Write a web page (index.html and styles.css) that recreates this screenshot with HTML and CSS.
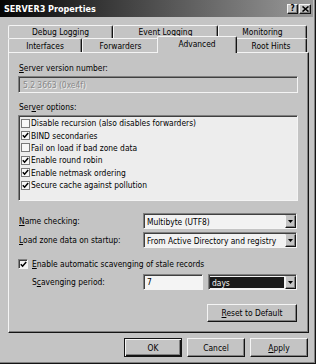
FILE: index.html
```html
<!DOCTYPE html>
<html lang="en">

<head>
    <meta charset="UTF-8">
    <meta name="viewport" content="width=device-width, initial-scale=1.0">
    <title>SERVER3 Properties</title>
    <link rel="stylesheet" href="styles.css">
</head>

<body>
    <div class="window">
        <div class="frame">
            <div class="titlebar">
                <span class="title">SERVER3 Properties</span>
                <div class="title-buttons">
                    <div class="tbtn help">?</div>
                    <div class="tbtn close">
                        <svg width="7" height="6" viewBox="0 0 7 6">
                            <path d="M0.5 0.5 L6.5 5.5 M6.5 0.5 L0.5 5.5" stroke="#000" stroke-width="1.6" fill="none" />
                        </svg>
                    </div>
                </div>
            </div>

            <div class="tabs">
                <div class="tab-row back">
                    <div class="tab w-debug">Debug Logging</div>
                    <div class="tab w-event">Event Logging</div>
                    <div class="tab w-monitor">Monitoring</div>
                </div>
                <div class="tab-row front">
                    <div class="tab w-iface">Interfaces</div>
                    <div class="tab w-fwd">Forwarders</div>
                    <div class="tab w-adv active">Advanced</div>
                    <div class="tab w-root">Root Hints</div>
                </div>
            </div>

            <div class="panel">
                <div class="label"><u>S</u>erver version number:</div>
                <div class="textbox disabled">5.2 3663 (0xe4f)</div>

                <div class="label gap">Ser<u>v</u>er options:</div>
                <div class="list">
                    <div class="item"><span class="lcheck"></span>Disable recursion (also disables forwarders)</div>
                    <div class="item"><span class="lcheck on"><svg width="7" height="7" viewBox="0 0 7 7"><path d="M0.8 3.2 L2.6 5.2 L6.2 1" stroke="#000" stroke-width="1.5" fill="none" /></svg></span>BIND secondaries</div>
                    <div class="item"><span class="lcheck"></span>Fail on load if bad zone data</div>
                    <div class="item"><span class="lcheck on"><svg width="7" height="7" viewBox="0 0 7 7"><path d="M0.8 3.2 L2.6 5.2 L6.2 1" stroke="#000" stroke-width="1.5" fill="none" /></svg></span>Enable round robin</div>
                    <div class="item"><span class="lcheck on"><svg width="7" height="7" viewBox="0 0 7 7"><path d="M0.8 3.2 L2.6 5.2 L6.2 1" stroke="#000" stroke-width="1.5" fill="none" /></svg></span>Enable netmask ordering</div>
                    <div class="item"><span class="lcheck on"><svg width="7" height="7" viewBox="0 0 7 7"><path d="M0.8 3.2 L2.6 5.2 L6.2 1" stroke="#000" stroke-width="1.5" fill="none" /></svg></span>Secure cache against pollution</div>
                </div>

                <div class="field-row first">
                    <div class="field-label"><u>N</u>ame checking:</div>
                    <div class="select">
                        <div class="value">Multibyte (UTF8)</div>
                        <div class="arrow"><svg width="5" height="3" viewBox="0 0 5 3"><path d="M0 0 H5 L2.5 3 Z" fill="#000" /></svg></div>
                    </div>
                </div>
                <div class="field-row second">
                    <div class="field-label"><u>L</u>oad zone data on startup:</div>
                    <div class="select">
                        <div class="value">From Active Directory and registry</div>
                        <div class="arrow"><svg width="5" height="3" viewBox="0 0 5 3"><path d="M0 0 H5 L2.5 3 Z" fill="#000" /></svg></div>
                    </div>
                </div>

                <div class="check-row">
                    <span class="check"><svg width="7" height="7" viewBox="0 0 7 7"><path d="M0.8 3.2 L2.6 5.2 L6.2 1" stroke="#000" stroke-width="1.5" fill="none" /></svg></span>
                    <span><u>E</u>nable automatic scavenging of stale records</span>
                </div>

                <div class="field-row scav">
                    <div class="field-label">S<u>c</u>avenging period:</div>
                    <div class="textbox small">7</div>
                    <div class="select days focus">
                        <div class="value">days</div>
                        <div class="arrow"><svg width="5" height="3" viewBox="0 0 5 3"><path d="M0 0 H5 L2.5 3 Z" fill="#000" /></svg></div>
                    </div>
                </div>

                <div class="reset-row">
                    <div class="btn reset"><span><u>R</u>eset to Default</span></div>
                </div>
            </div>

            <div class="buttons">
                <div class="btn default">OK</div>
                <div class="btn">Cancel</div>
                <div class="btn"><span><u>A</u>pply</span></div>
            </div>
        </div>
    </div>
</body>

</html>
```

FILE: styles.css
```css
body,
html {
    margin: 0;
    padding: 0;
    overflow: hidden;
}

body {
    font-family: "DejaVu Sans Condensed", "Liberation Sans", sans-serif;
    font-size: 8.4px;
    color: #000;
    background-color: #c4c4c4;
}

u {
    text-decoration: underline;
    text-underline-offset: 1px;
}

.window {
    width: 316px;
    height: 364px;
    box-sizing: border-box;
    background-color: #c4c4c4;
    border-right: 1px solid #141414;
    border-bottom: 1px solid #141414;
}

.frame {
    height: 100%;
    box-sizing: border-box;
    border-right: 1px solid #808080;
    border-bottom: 1px solid #808080;
    padding-right: 1px;
}

/* title bar */
.titlebar {
    height: 17px;
    display: flex;
    align-items: center;
    justify-content: space-between;
    padding: 0 2px 0 4px;
    background: linear-gradient(to right, #050505, #3a3a3a 35%, #9a9a9a);
}

.title {
    color: #fff;
    font-weight: bold;
    font-size: 9px;
}

.title-buttons {
    display: flex;
    gap: 1px;
}

.tbtn {
    width: 11px;
    height: 10px;
    box-sizing: border-box;
    background-color: #c4c4c4;
    border: 1px solid;
    border-color: #f4f4f4 #141414 #141414 #f4f4f4;
    box-shadow: inset -1px -1px 0 #808080;
    display: flex;
    align-items: center;
    justify-content: center;
    font-weight: bold;
    font-size: 8px;
    line-height: 8px;
}

.tbtn.close {
    width: 12px;
}

/* tabs */
.tabs {
    margin: 8px 4px 0 8px;
}

.tab-row {
    display: flex;
}

.tab-row.back {
    height: 13px;
}

.tab-row.front {
    height: 14px;
}

.tab {
    box-sizing: border-box;
    border-top: 1px solid #f4f4f4;
    border-left: 1px solid #f4f4f4;
    border-right: 1px solid #141414;
    border-radius: 2px 2px 0 0;
    box-shadow: inset -1px 0 0 #808080;
    background-color: #c4c4c4;
    display: flex;
    align-items: center;
    justify-content: center;
    white-space: nowrap;
}

.w-debug {
    width: 105px;
}

.w-event {
    width: 105px;
}

.w-monitor {
    width: 89px;
}

.w-iface {
    width: 74px;
}

.w-fwd {
    width: 77px;
}

.w-adv {
    width: 80px;
}

.w-root {
    width: 72px;
}

.tab.active {
    position: relative;
    z-index: 1;
    margin: -2px -2px -1px -2px;
    padding-bottom: 2px;
}

/* main panel */
.panel {
    margin: 0 4px 0 8px;
    border: 1px solid;
    border-color: #f4f4f4 #141414 #141414 #f4f4f4;
    box-shadow: inset -1px -1px 0 #808080;
    padding: 9px 10px 10px 9px;
}

.label {
    height: 12px;
    line-height: 12px;
    padding-left: 1px;
}

.label.gap {
    margin-top: 8px;
}

.textbox {
    height: 17px;
    margin-top: 2px;
    box-sizing: border-box;
    border: 1px solid;
    border-color: #808080 #f4f4f4 #f4f4f4 #808080;
    box-shadow: inset 1px 1px 0 #404040;
    padding-left: 4px;
    display: flex;
    align-items: center;
    background-color: #f4f4f4;
}

.textbox.disabled {
    background-color: #c4c4c4;
    color: #8a8a8a;
    text-shadow: 1px 1px 0 #ececec;
}

.textbox.small {
    width: 60px;
    height: 16px;
    margin-top: 0;
    padding-left: 3px;
}

.list {
    height: 86px;
    margin-top: 2px;
    box-sizing: border-box;
    border: 1px solid;
    border-color: #808080 #f4f4f4 #f4f4f4 #808080;
    box-shadow: inset 1px 1px 0 #404040;
    background-color: #ededed;
    padding: 1px 0 0 2px;
}

.item {
    height: 12.4px;
    display: flex;
    align-items: center;
    white-space: nowrap;
}

.lcheck {
    width: 9px;
    height: 9px;
    box-sizing: border-box;
    border: 1px solid #7a7a7a;
    background-color: #f8f8f8;
    margin-right: 1px;
    display: flex;
    align-items: center;
    justify-content: center;
}

.field-row {
    display: flex;
    align-items: center;
    height: 16px;
}

.field-row.first {
    margin-top: 12px;
}

.field-row.second {
    margin-top: 3px;
}

.field-row.scav {
    margin-top: 4px;
    padding-left: 13px;
}

.field-label {
    width: 125px;
    padding-left: 1px;
    box-sizing: border-box;
    white-space: nowrap;
}

.scav .field-label {
    width: 112px;
}

.select {
    width: 154px;
    height: 16px;
    box-sizing: border-box;
    border: 1px solid;
    border-color: #808080 #f4f4f4 #f4f4f4 #808080;
    box-shadow: inset 1px 1px 0 #404040;
    background-color: #f2f2f2;
    display: flex;
    padding: 1px 0 0 1px;
}

.select .value {
    flex-grow: 1;
    display: flex;
    align-items: center;
    padding-left: 2px;
    white-space: nowrap;
    overflow: hidden;
}

.select .arrow {
    width: 11px;
    box-sizing: border-box;
    background-color: #c4c4c4;
    border: 1px solid;
    border-color: #c4c4c4 #141414 #141414 #f4f4f4;
    box-shadow: inset -1px -1px 0 #808080;
    display: flex;
    align-items: center;
    justify-content: center;
}

.select.days {
    width: 89px;
    margin-left: 5px;
}

.select.focus .value {
    background-color: #1a1a1a;
    color: #f4f4f4;
    margin: 1px 1px 1px 0;
}

.check-row {
    display: flex;
    align-items: center;
    height: 12px;
    margin-top: 10px;
    white-space: nowrap;
}

.check {
    width: 10px;
    height: 10px;
    box-sizing: border-box;
    border: 1px solid;
    border-color: #808080 #f4f4f4 #f4f4f4 #808080;
    box-shadow: inset 1px 1px 0 #404040;
    background-color: #f4f4f4;
    margin-right: 4px;
    display: flex;
    align-items: center;
    justify-content: center;
}

.reset-row {
    display: flex;
    justify-content: flex-end;
    margin-top: 14px;
}

.btn {
    width: 58px;
    height: 19px;
    box-sizing: border-box;
    background-color: #c4c4c4;
    border: 1px solid;
    border-color: #f4f4f4 #141414 #141414 #f4f4f4;
    box-shadow: inset -1px -1px 0 #808080;
    display: flex;
    align-items: center;
    justify-content: center;
}

.btn.reset {
    width: 90px;
    height: 18px;
    margin-right: 1px;
}

.btn.default {
    border-color: #141414;
    box-shadow: inset 1px 1px 0 #f4f4f4, inset -1px -1px 0 #141414, inset -2px -2px 0 #808080;
}

.buttons {
    display: flex;
    justify-content: flex-end;
    gap: 5px;
    margin-top: 5px;
    padding-right: 5px;
}
```
